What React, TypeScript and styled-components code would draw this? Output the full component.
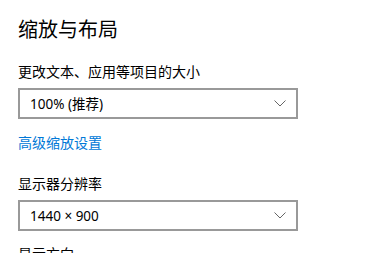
import React from "react";
import styled, { createGlobalStyle } from "styled-components";

const Global = createGlobalStyle`
  html, body { margin: 0; padding: 0; background: #ffffff; }
  body { font-family: "Noto Sans", "Noto Sans CJK SC", sans-serif; color: #000; }
`;

const Page = styled.div`
  width: 365px;
  height: 253px;
  overflow: hidden;
  padding: 15px 0 0 18px;
  box-sizing: border-box;
  display: flex;
  flex-direction: column;
  align-items: flex-start;
  & > * { flex-shrink: 0; }
`;

const Title = styled.h1`
  margin: 0 0 18px;
  font-family: "Noto Sans CJK SC", sans-serif;
  font-size: 20px;
  line-height: 28px;
  font-weight: 400;
  color: #000;
`;

const Label = styled.div<{ $mt?: number }>`
  margin: ${(p) => p.$mt ?? 0}px 0 7px;
  font-family: "Noto Sans CJK SC", sans-serif;
  font-size: 14px;
  line-height: 20px;
  color: #000;
`;

const Select = styled.div`
  box-sizing: border-box;
  width: 280px;
  height: 31px;
  border: 2px solid #999999;
  display: flex;
  align-items: center;
  justify-content: space-between;
  padding: 0 10px 0 10px;
  background: #fff;
`;

const Value = styled.span`
  font-family: "Noto Sans", "Noto Sans CJK SC", sans-serif;
  font-size: 13.5px;
  line-height: 20px;
  color: #000;
`;

const Link = styled.a`
  margin-top: 13px;
  font-family: "Noto Sans CJK SC", sans-serif;
  font-size: 14px;
  line-height: 20px;
  color: #0078d7;
  text-decoration: none;
`;

const Chevron = () => (
  <svg width="12" height="7" viewBox="0 0 12 7">
    <polyline points="0.5,0.5 6,6 11.5,0.5" fill="none" stroke="#666" strokeWidth="1" />
  </svg>
);

export default function App() {
  return (
    <>
      <Global />
      <Page>
        <Title>缩放与布局</Title>
        <Label>更改文本、应用等项目的大小</Label>
        <Select>
          <Value>100% (推荐)</Value>
          <Chevron />
        </Select>
        <Link href="#">高级缩放设置</Link>
        <Label $mt={21}>显示器分辨率</Label>
        <Select>
          <Value>1440 × 900</Value>
          <Chevron />
        </Select>
        <Label $mt={12}>显示方向</Label>
      </Page>
    </>
  );
}
